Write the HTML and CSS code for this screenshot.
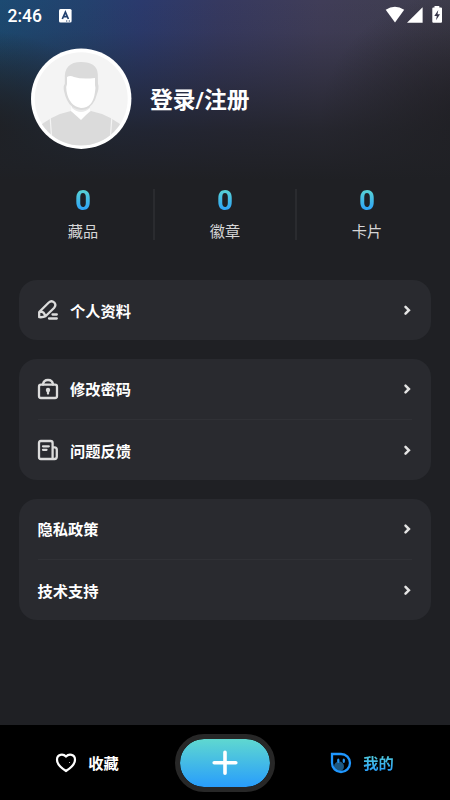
FILE: index.html
```html
<!DOCTYPE html>
<html lang="zh-CN">
<head>
<meta charset="utf-8">
<title>我的</title>
<link rel="stylesheet" href="styles.css">
</head>
<body>
<div class="app">
  <header class="status">
    <span class="time">2:46</span>
    <svg class="notice" width="13" height="14" viewBox="0 0 13 14"><rect width="12.6" height="13.5" rx="1.5" fill="#fff"/><path d="M3.3 10 6.4 3.2 9.4 10M4.4 7.7h4" fill="none" stroke="#24426f" stroke-width="1.7"/><path d="M7 12h1.3M9.7 12H11" stroke="#24426f" stroke-width="1"/></svg>
    <svg class="signals" width="58" height="18" viewBox="0 0 58 18"><path d="M.7 3.8Q9.9-2.2 19.2 3.8L10 16.4Z" fill="#fff"/><path d="M22 16.8 37.6 1.2V16.8Z" fill="#fff"/><path d="M49.5 0h4.8v1.5H56q1 0 1 1V15.8q0 1-1 1h-7.700q-1 0-1-1V2.500q0-1 1-1h1.200Z" fill="#fff"/><path d="M53.300 4 49.300 10h2.500l-.8 4.300 4-6h-2.500Z" fill="#353448"/></svg>
  </header>
  <section class="profile">
    <svg class="avatar" width="102" height="102" viewBox="0 0 102 102">
      <defs><clipPath id="face"><circle cx="51" cy="51" r="46.500"/></clipPath></defs>
      <circle cx="51.200" cy="50.700" r="50.200" fill="#fff"/><circle cx="51.200" cy="50.700" r="46.500" fill="#f4f4f4"/>
      <g clip-path="url(#face)">
        <path d="M0 86Q20 67 41 63L51 70 61 63Q82 67 102 86V102H0Z" fill="#dbdbdb"/>
        <path d="M42 55H60V63L51 72 41 63Z" fill="#fff"/>
        <path d="M42 55H60V60Q51 68 42 60Z" fill="#e9e9e9"/>
        <path d="M34.800 31Q34 14 51 14Q67 14 67.800 26L68 36Q69 38 68 43Q66 49 65 52Q60 62 51 62Q41 61 37 52Q35 48 34 43Q33 38 34.800 36Z" fill="#dbdbdb"/>
        <path d="M37 29Q40 27 44 29Q52 31.500 65 30V37Q66 40 65 44Q63 60 51 60Q39 58 36.500 43Q35.500 39 37 36Z" fill="#fff"/>
        <path d="M20 67 21.500 88M82 67 80.500 88" stroke="#f4f4f4" stroke-width="1.200"/>
      </g>
    </svg>
    <h1>登录/注册</h1>
  </section>
  <section class="stats">
    <div class="stat"><b>0</b><span>藏品</span></div>
    <div class="stat"><b>0</b><span>徽章</span></div>
    <div class="stat"><b>0</b><span>卡片</span></div>
  </section>
  <main class="cards">
    <div class="card single">
      <div class="row"><svg class="icon" viewBox="0 0 22 22"><path d="M2.200 18.200 2.200 13 11.800 3.500Q14.500 1 17.300 3.500Q19.600 6.200 17 9L8.500 17.300Q6.500 18.500 2.200 18.200ZM3 12.700Q7.500 12.700 7.900 17M15.500 15.500H19.800M12 19.500H19.800"/></svg><span>个人资料</span><svg class="arrow" viewBox="0 0 8 12"><path d="M2.500 2.800 5.900 6.200 2.500 9.600"/></svg></div>
    </div>
    <div class="card">
      <div class="row"><svg class="icon" viewBox="0 0 22 22"><rect x="2" y="6.700" width="18" height="13.300" rx="2"/><path d="M6 6.500Q6.500 2 11 2T16 6.500M11 12V15.500"/><circle class="fill" cx="11" cy="12" r="2.200"/></svg><span>修改密码</span><svg class="arrow" viewBox="0 0 8 12"><path d="M2.500 2.600 5.900 6 2.500 9.400"/></svg></div>
      <div class="row"><svg class="icon" viewBox="0 0 22 22"><path d="M3.800 2H13.600Q15.600 2 15.600 4V20H3.800Q2 20 2 18V4Q2 2 3.800 2ZM15.600 8.300H17.500Q19.800 8.300 19.800 10.800V17.500Q19.800 20 17.500 20H15.600M6 7.300H11.800M6 10.800H9.500"/></svg><span>问题反馈</span><svg class="arrow" viewBox="0 0 8 12"><path d="M2.500 2.900 5.900 6.300 2.500 9.700"/></svg></div>
    </div>
    <div class="card">
      <div class="row"><span>隐私政策</span><svg class="arrow" viewBox="0 0 8 12"><path d="M2.500 2.600 5.900 6 2.500 9.400"/></svg></div>
      <div class="row"><span>技术支持</span><svg class="arrow" viewBox="0 0 8 12"><path d="M2.500 2.900 5.900 6.300 2.500 9.700"/></svg></div>
    </div>
  </main>
  <nav class="tabs">
    <a class="tab"><svg width="22" height="20" viewBox="0 0 22 20"><path d="M11 18C7 15.500 2 11.500 2 6.700C2 1 8.200.500 11 3.500C13.800.500 20 1 20 6.700C20 11.500 15 15.500 11 18Z" fill="none" stroke="#fff" stroke-width="2.200"/><path d="M14 10 15 9" stroke="#aaa" stroke-width="1"/></svg><span>收藏</span></a>
    <a class="add"><svg width="26" height="26" viewBox="0 0 26 26"><path d="M13 2.200V23.300M2.200 12.700H23.800" stroke="#fff" stroke-width="3.600" stroke-linecap="round"/></svg></a>
    <a class="tab active"><svg width="22" height="22" viewBox="0 0 22 22"><circle cx="9" cy="14.500" r="5" fill="#1d5781"/><path d="M2 2H11A9 9 0 1 1 2 11Z" fill="none" stroke="#1f97ff" stroke-width="2.300"/><ellipse cx="8.300" cy="8.800" rx="1.200" ry="2.200" fill="#2597f5"/><ellipse cx="13.800" cy="8.800" rx="1.200" ry="2.200" fill="#2597f5"/></svg><span>我的</span></a>
  </nav>
</div>
</body>
</html>
```

FILE: styles.css
```css
* { box-sizing: border-box; }

body {
  margin: 0;
  background: #1f2024;
  color: #fff;
  font-family: Roboto, "Noto Sans CJK SC", sans-serif;
}

.app {
  width: 450px;
  height: 800px;
  display: flex;
  flex-direction: column;
  background:
    linear-gradient(180deg, rgba(31, 32, 36, 0) 0, rgba(31, 32, 36, .07) 32px, rgba(31, 32, 36, .43) 82px, rgba(31, 32, 36, .8) 130px, #1f2024 180px),
    radial-gradient(ellipse 150px 130px at 470px 120px, rgba(35, 31, 39, .9) 10%, rgba(35, 31, 39, 0) 100%),
    radial-gradient(ellipse 140px 100px at -20px 130px, rgba(31, 32, 36, .9) 10%, rgba(31, 32, 36, 0) 100%),
    linear-gradient(90deg, #1c4a72 0, #23426e 80px, #2b3a6d 140px, #363960 220px, #403d58 320px, #3f3e4d 450px);
}

.status {
  height: 30px;
  padding: 0 7px;
  display: flex;
  align-items: center;
}

.time { font-size: 17.500px; font-weight: 500; width: 52px; padding-left: .5px; padding-top: 1px; }
.notice { margin-top: 1px; }
.signals { margin-left: auto; margin-top: -1px; }

.profile {
  height: 138px;
  padding: 18px 0 0 30px;
  display: flex;
  align-items: flex-start;
}

.profile h1 {
  margin: 36px 0 0 18px;
  font-size: 22.800px;
  line-height: 34px;
  font-weight: 700;
}

.stats {
  height: 112px;
  padding: 21px 12px 0;
  display: grid;
  grid-template-columns: repeat(3, 142px);
}

.stat {
  height: 51px;
  display: flex;
  flex-direction: column;
  align-items: center;
  border-right: 2px solid #2a2b2f;
  padding-right: 1px;
  margin-left: 2px;
  margin-right: -1px;
}

.stat:last-child { border-color: transparent; }

.stat b {
  font-size: 28px;
  line-height: 24px;
  background: linear-gradient(#5bd5d2, #269bfd);
  background-clip: text;
  color: transparent;
}

.stat span { font-size: 15.200px; line-height: 22px; margin-top: 8px; color: #d6d6d7; }

.cards { padding: 0 19px; display: grid; gap: 19px; }
.card { padding: 0 19px; border-radius: 18px; background: #292a2f; }

.row {
  height: 60px;
  display: flex;
  align-items: center;
  font-size: 15.250px;
  font-weight: 700;
}

.row span { margin-bottom: 2px; }
.single .row span { margin-bottom: 0; }
.row + .row { height: 61px; border-top: 1px solid #303136; }
.row + .row span { margin-bottom: 1px; }
.row > span:first-child { margin-left: -.5px; }
.icon { width: 22px; height: 22px; margin-left: -1.500px; margin-right: 11.500px; }
.icon path, .icon rect { fill: none; stroke: #dcdcdc; stroke-width: 2.300; stroke-linejoin: round; stroke-linecap: round; }
.icon .fill { fill: #dcdcdc; }
.arrow { width: 8px; height: 12px; margin-left: auto; margin-right: 1px; }
.arrow path { fill: none; stroke: #e4e4e4; stroke-width: 2.500; stroke-linecap: round; }

.tabs {
  height: 75px;
  margin-top: auto;
  display: grid;
  grid-template-columns: 175px 100px 175px;
  align-items: center;
  background: #000;
}

.tab {
  display: flex;
  align-items: center;
  justify-content: center;
  gap: 11px;
  font-size: 15.250px;
  font-weight: 700;
}

.tab svg { margin-left: -1px; }
.tab span { margin-bottom: 1px; }

.active span {
  background: linear-gradient(#5bd5d2, #269bfd);
  background-clip: text;
  color: transparent;
}

.add {
  height: 58px;
  display: flex;
  align-items: center;
  justify-content: center;
  border: 5px solid #272727;
  border-radius: 29px;
  background: linear-gradient(#5fd8d0, #289dfc) padding-box;
}
```
